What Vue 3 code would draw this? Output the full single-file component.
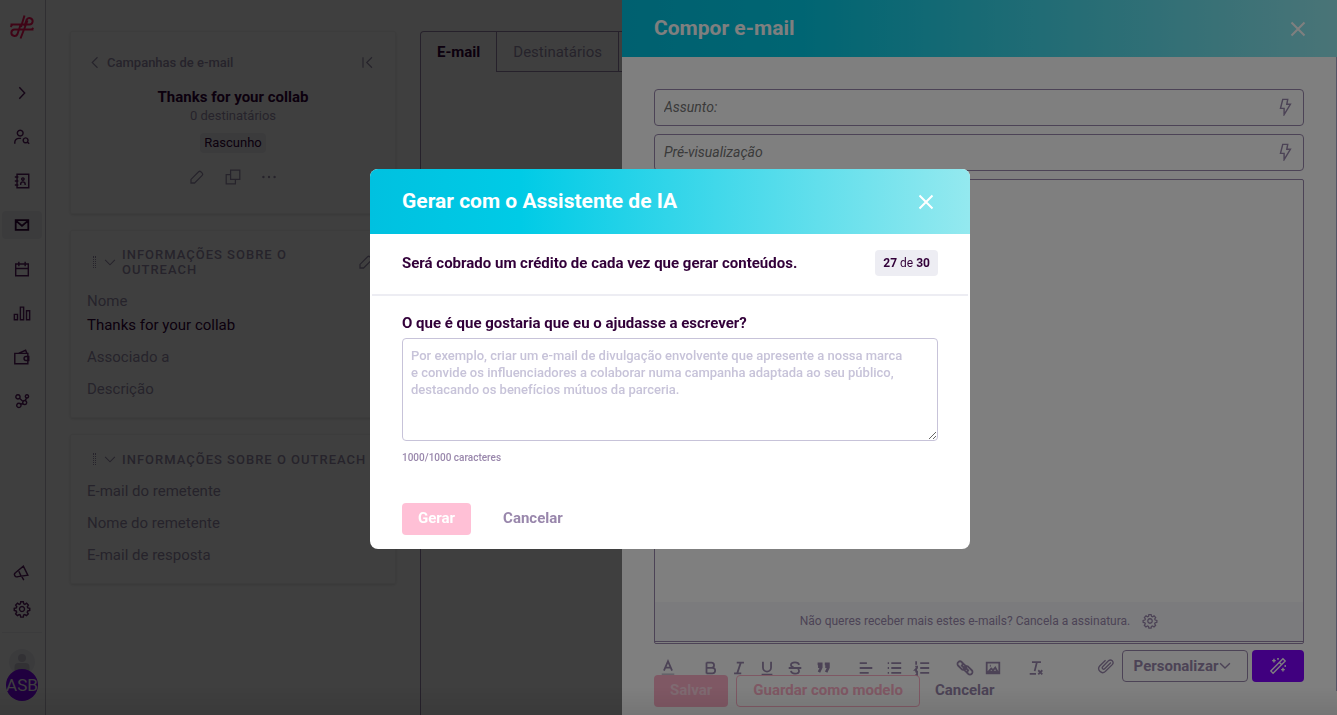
<script setup>
import { ref } from 'vue'

const mainNav = [
  { label: 'Expandir', d: 'M7 3.5l6 6.5-6 6.5' },
  { label: 'Descobrir', d: 'M8 2.5a3.2 3.2 0 1 0 .01 0zM2 17.500v-1.500a4.500 4.500 0 0 1 4.500-4.500h2.500M14 11a2.700 2.700 0 1 0 .01 0zM16 15.500l2 2' },
  { label: 'Contactos', d: 'M4.500 2.500h13v15h-13zM2 5.500h4M2 10h4M2 14.500h4M8.500 14.500v-1a2.500 2.500 0 0 1 5 0v1M11 6.500a1.300 1.300 0 1 0 .01 0z' },
  { label: 'Mensagens', d: 'M3 4.500h14v11h-14zM3 5l7 6 7-6', active: true },
  { label: 'Calendário', d: 'M3 4.500h14v13h-14zM3 9.500h14M6.500 2v5M13.500 2v5' },
  { label: 'Relatórios', d: 'M1.500 11.500h3.500v6h-3.500zM8.200 3.500h3.600v14h-3.600zM15 7.500h3.500v10h-3.500z' },
  { label: 'Pagamentos', d: 'M2 6h14.500v11.500h-14.500zM6 6l8-3.500 1.500 3.500M17.500 9.500h-3a2.200 2.200 0 0 0 0 4.400h3z' },
  { label: 'Integrações', d: 'M5.500 3a2.400 2.400 0 1 0 .01 0zM15.500 3a1.800 1.800 0 1 0 .01 0zM6.500 12.500a2.400 2.400 0 1 0 .01 0zM13 9.500a2.200 2.200 0 1 0 .01 0zM7.200 7l4 3.500M15 6.500l-1.200 3M8.500 13.800l2.500-1.300' }
]
const gear = 'M8.600 2h2.800l.5 2.200 1.300.6 1.900-1.200 2 2-1.200 1.900.6 1.300 2.100.5v2.400l-2.200.5-.6 1.300 1.200 1.900-2 2-1.900-1.200-1.300.6-.4 2.200h-2.800l-.5-2.200-1.300-.6-1.900 1.200-2-2 1.200-1.900-.6-1.300-2.100-.5v-2.400l2.200-.5.6-1.300-1.200-1.900 2-2 1.900 1.200 1.300-.6zM10 7.200a2.800 2.800 0 1 0 .01 0z'
const lowNav = [
  { label: 'Novidades', d: 'M3 9.500l8.500-7 5 10-11 1.500a2.300 2.300 0 0 1-2.500-4.500zM6.500 8l2.500 5.500M9.500 13.500l2.500 4.500' },
  { label: 'Definições', d: gear }
]
const bolt = 'M7.500 1.500h5.500l-1 5.500h4l-7 11.500v-7h-4z'
const pencil = 'M2.500 17.500v-4.500l9.500-9.500a2 2 0 0 1 2.800 0l1.700 1.700a2 2 0 0 1 0 2.800l-9.500 9.500z'

const fields = ref([
  { id: 'subject', label: 'Assunto:', value: '' },
  { id: 'preview', label: 'Pré-visualização', value: '' }
])
const tools = [
  { label: 'Negrito', d: 'M5 4v12M5 4h5.500a2.900 2.900 0 0 1 0 5.800h-5.500M5 9.800h6.500a3.100 3.100 0 0 1 0 6.200h-6.500', group: true },
  { label: 'Itálico', d: 'M7.500 4h8M4.500 16h8M12 4l-4 12' },
  { label: 'Sublinhado', d: 'M5.500 3v6.500a4.500 4.500 0 0 0 9 0v-6.500M4 17.500h12' },
  { label: 'Rasurado', d: 'M14.500 6.500c-.3-1.700-2-2.700-4.500-2.700-2.700 0-4.500 1.100-4.500 2.900 0 1.600 1.500 2.200 3 2.500M3 10h14M5.500 13.200c.3 1.900 2 3 4.500 3 2.700 0 4.500-1.200 4.500-3 0-1-.5-1.700-1.300-2.200' },
  { label: 'Citação', d: 'M4 5.500h4v4l-2.500 5M12 5.500h4v4l-2.500 5M4.500 8.500h3M12.500 8.500h3', heavy: true },
  { label: 'Alinhar', d: 'M3 4.500h8M3 10h14M3 15.500h10', group: true },
  { label: 'Lista', d: 'M7 4.500h11M7 10h11M7 15.500h11M3 4.500h1.500M3 10h1.500M3 15.500h1.500' },
  { label: 'Lista numerada', d: 'M8 4.500h10M8 10h10M8 15.500h10M3.500 2.500v4M2.500 8.500h2v1.500l-2 2h2M2.500 14h2v4h-2' },
  { label: 'Ligação', d: 'M10.500 11.500l-4-4a2.800 2.800 0 0 0-4-4 2.800 2.800 0 0 0 0 4l3.500 3.500a2.800 2.800 0 0 0 4.500 0M9.500 8.500l4 4a2.800 2.800 0 0 0 4 4 2.800 2.800 0 0 0 0-4l-3.500-3.500a2.800 2.800 0 0 0-4.500 0M10.500 11.500a2.800 2.800 0 0 0-.5-4.500l-3.500-3.500a2.800 2.800 0 0 0-4 0M9.500 8.500a2.800 2.800 0 0 0 .5 4.500l3.500 3.500a2.800 2.800 0 0 0 4 0', group: true },
  { label: 'Imagem', d: 'M3 4h14v12h-14zM5 14l3-3.500 2 2 2.500-3 2.500 4.500zM6.500 7.500h1' },
  { label: 'Limpar', d: 'M5.500 3.500h10M11 3.500l-2.500 10M3 16.500h7M12.500 12.500l4.500 4.500M17 12.500l-4.500 4.500', group: true }
]
const senderRows = ['E-mail do remetente', 'Nome do remetente', 'E-mail de resposta']
const prompt = ref('')
const message = ref('')
</script>

<template>
  <div class="page">
    <aside class="sidebar">
      <svg class="logo" viewBox="0 0 24 24"><path d="M14.500 0.500l-3.500 11.500M17.500 5.500l-7 18M.5 9.500h15.500M23.500 14.500h-15.500M16 9.500h3.500a3.200 3.200 0 1 0-3-4.500l-2 6M8 14.500h-3.500a3.200 3.200 0 1 0 3 4.500l3-9M0.500 12l2-2.500M21.500 14.500l2-1.500" /></svg>
      <nav class="nav">
        <a v-for="n in mainNav" :key="n.label" href="#" :aria-label="n.label" :class="{ active: n.active }">
          <svg class="icon" viewBox="0 0 20 20"><path :d="n.d" /></svg>
        </a>
      </nav>
      <nav class="nav low">
        <a v-for="n in lowNav" :key="n.label" href="#" :aria-label="n.label">
          <svg class="icon" viewBox="0 0 20 20"><path :d="n.d" /></svg>
        </a>
      </nav>
      <div class="account">
        <svg class="person" viewBox="0 0 26 26"><circle cx="13" cy="13" r="13" fill="#ededf3" /><circle cx="13" cy="9" r="4" fill="#c8c5d3" /><path d="M5.500 23v-5a4 4 0 0 1 4-4h7a4 4 0 0 1 4 4v5z" fill="#c8c5d3" /></svg>
        <span class="avatar">ASB</span>
      </div>
    </aside>

    <main class="main">
      <div class="cards">
        <section class="card summary">
          <div class="crumb">
            <a href="#"><svg class="icon" viewBox="0 0 20 20"><path d="M14 3l-7 7 7 7" /></svg>Campanhas de e-mail</a>
            <button type="button" aria-label="Recolher"><svg class="icon" viewBox="0 0 20 20"><path d="M4 3v14M16 3l-7 7 7 7" /></svg></button>
          </div>
          <h2>Thanks for your collab</h2>
          <p>0 destinatários</p>
          <span class="tag">Rascunho</span>
          <div class="actions">
            <button type="button" aria-label="Editar"><svg class="icon" viewBox="0 0 20 20"><path :d="pencil" /></svg></button>
            <button type="button" aria-label="Duplicar"><svg class="icon" viewBox="0 0 20 20"><path d="M7 1.500h11.500v11.500h-11.500zM7 7h-5.500v11.500h11.500v-5.500" /></svg></button>
            <button type="button" aria-label="Mais"><svg class="icon dots" viewBox="0 0 20 20"><circle cx="3" cy="10" r="1.500" /><circle cx="10" cy="10" r="1.500" /><circle cx="17" cy="10" r="1.500" /></svg></button>
          </div>
        </section>

        <section class="card">
          <header class="card-head">
            <span class="grip"></span>
            <svg class="icon" viewBox="0 0 20 20"><path d="M3 7l7 7 7-7" /></svg>
            <h3>Informações sobre o outreach</h3>
            <button type="button" aria-label="Editar informações"><svg class="icon" viewBox="0 0 20 20"><path :d="pencil" /></svg></button>
          </header>
          <dl>
            <div><dt>Nome</dt><dd>Thanks for your collab</dd></div>
            <div><dt>Associado a</dt></div>
            <div><dt>Descrição</dt></div>
          </dl>
        </section>

        <section class="card">
          <header class="card-head single">
            <span class="grip"></span>
            <svg class="icon" viewBox="0 0 20 20"><path d="M3 7l7 7 7-7" /></svg>
            <h3>Informações sobre o outreach</h3>
          </header>
          <dl>
            <div v-for="r in senderRows" :key="r"><dt>{{ r }}</dt></div>
          </dl>
        </section>
      </div>

      <div class="content">
        <div class="tabs">
          <button type="button" class="current">E-mail</button>
          <button type="button">Destinatários</button>
          <span class="rest"></span>
        </div>
        <div class="panel"></div>
      </div>
    </main>

    <div class="overlay side">
      <section class="drawer">
        <header class="bar">
          <h2>Compor e-mail</h2>
          <button type="button" class="close" aria-label="Fechar editor"><svg viewBox="0 0 16 16"><path d="M1.500 1.500l13 13M14.500 1.500l-13 13" /></svg></button>
        </header>
        <div class="compose">
          <div v-for="f in fields" :key="f.id" class="field">
            <input :id="f.id" v-model="f.value" type="text" :aria-label="f.label" :placeholder="f.label">
            <button type="button" :aria-label="'Variáveis de ' + f.label"><svg class="icon" viewBox="0 0 20 20"><path :d="bolt" /></svg></button>
          </div>
          <div class="editor">
            <textarea v-model="message" aria-label="Mensagem"></textarea>
            <div class="optout">
              <span>Não queres receber mais estes e-mails? Cancela a assinatura.</span>
              <svg class="icon" viewBox="0 0 20 20"><path :d="gear" /></svg>
            </div>
          </div>
          <div class="toolbar">
            <button type="button" class="color" aria-label="Cor do texto"><svg class="icon" viewBox="0 0 20 20"><path d="M5.500 13l4.500-10.500 4.500 10.500M7 9.500h6" /><path d="M3 17h14" class="swatch" /></svg></button>
            <button v-for="t in tools" :key="t.label" type="button" :aria-label="t.label" :class="{ group: t.group, heavy: t.heavy }"><svg class="icon" viewBox="0 0 20 20"><path :d="t.d" /></svg></button>
            <button type="button" class="attach" aria-label="Anexar"><svg class="icon" viewBox="0 0 20 20"><path d="M15.500 6l-7 7a1.500 1.500 0 0 1-2.200-2.200l6.700-6.800a3 3 0 0 1 4.200 4.200l-8 8a4.400 4.400 0 0 1-6.200-6.200l6.500-6.500" /></svg></button>
            <button type="button" class="personalize">Personalizar<svg class="icon" viewBox="0 0 20 20"><path d="M3 6l7 7 7-7" /></svg></button>
            <button type="button" class="magic" aria-label="Assistente de IA"><svg class="icon" viewBox="0 0 20 20"><path d="M2 15.500l13.500-13.500 2.500 2.500-13.500 13.500zM11.500 6l2.500 2.500M5.500 2v4M3.500 4h4M15.500 12v4M13.500 14h4M10 1v2M9 2h2M18 9v2" /></svg></button>
          </div>
        </div>
        <footer class="buttons">
          <button type="button" class="primary" disabled>Salvar</button>
          <button type="button" class="outline" disabled>Guardar como modelo</button>
          <button type="button" class="plain">Cancelar</button>
        </footer>
        <span class="scroll"></span>
      </section>
    </div>

    <div class="overlay middle">
      <section class="modal" role="dialog" aria-labelledby="dialog-title">
        <header class="bar">
          <h2 id="dialog-title">Gerar com o Assistente de IA</h2>
          <button type="button" class="close" aria-label="Fechar"><svg viewBox="0 0 16 16"><path d="M1.500 1.500l13 13M14.500 1.500l-13 13" /></svg></button>
        </header>
        <div class="credits">
          <strong>Será cobrado um crédito de cada vez que gerar conteúdos.</strong>
          <span class="count"><b>27</b> de <b>30</b></span>
        </div>
        <form class="form" @submit.prevent>
          <label for="prompt">O que é que gostaria que eu o ajudasse a escrever?</label>
          <textarea id="prompt" v-model="prompt" maxlength="1000" placeholder="Por exemplo, criar um e-mail de divulgação envolvente que apresente a nossa marca e convide os influenciadores a colaborar numa campanha adaptada ao seu público, destacando os benefícios mútuos da parceria."></textarea>
          <small>{{ 1000 - prompt.length }}/1000 caracteres</small>
          <div class="form-actions">
            <button type="submit" class="primary" disabled>Gerar</button>
            <button type="button" class="plain">Cancelar</button>
          </div>
        </form>
      </section>
    </div>
    <div class="edge"></div>
  </div>
</template>

<style>
body { margin: 0; background: #fff; overflow: hidden; }
</style>

<style scoped>
.page { display: flex; height: 100vh; overflow: hidden; font-family: Roboto, "Liberation Sans", sans-serif; font-size: 15px; color: #320039; }
* { box-sizing: border-box; }
h2, h3, p, dl, dd { margin: 0; }
button { display: flex; align-items: center; justify-content: center; padding: 0; border: 0; background: none; color: inherit; font: inherit; }
a { color: inherit; text-decoration: none; }
.icon { display: block; flex: none; width: 18px; height: 18px; fill: none; stroke: currentColor; stroke-width: 1.6; }

.sidebar { display: flex; flex: none; flex-direction: column; align-items: center; width: 46px; padding: 15px 3px 14px 2px; border-right: 1px solid #c0bdca; color: #591b60; }
.logo { width: 24px; height: 24px; fill: none; stroke: #ff1358; stroke-width: 2; }
.nav { display: flex; flex-direction: column; gap: 16px; width: 40px; margin-top: 40px; }
.nav a { display: flex; align-items: center; justify-content: center; height: 28px; border-radius: 4px; }
.nav .active { background: #ededf3; color: #320039; }
.nav .active .icon { stroke-width: 2; }
.low { gap: 8px; margin-top: auto; padding-bottom: 9px; border-bottom: 1px solid #ededf3; }
.account { display: flex; flex-direction: column; align-items: center; margin-top: 16px; }
.person { width: 26px; height: 26px; }
.avatar { display: grid; place-items: center; width: 32px; height: 32px; margin-top: -6px; border-radius: 50%; background: #8000ff; color: #fff; font-size: 17px; }

.main { display: flex; flex: 1; gap: 24px; padding: 31px 24px 0; }
.cards { display: flex; flex: none; flex-direction: column; gap: 16px; width: 326px; }
.card { padding: 15px 16px 12px; border: 1px solid #f1f1f1; border-radius: 2px; box-shadow: 0 1px 3px #0002; color: #9a8fae; }
.summary { display: flex; flex-direction: column; align-items: center; height: 183px; }
.crumb { display: flex; align-items: center; justify-content: space-between; width: 100%; height: 31px; font-size: 13px; font-weight: 500; }
.crumb a { display: flex; align-items: center; gap: 5px; }
.crumb .icon { width: 15px; height: 15px; }
.crumb button { width: 24px; }
.summary h2 { margin-top: 10px; color: #320039; font-size: 15px; font-weight: 700; line-height: 18px; }
.summary p { font-size: 13px; line-height: 20px; }
.tag { margin-top: 7px; padding: 0 4px; border-radius: 4px; background: #ededf3; color: #320039; font-size: 13px; line-height: 20px; }
.actions { display: flex; gap: 20px; margin-top: 16px; }
.actions .icon { width: 16px; height: 16px; }
.actions .dots { fill: currentColor; stroke: none; }
.card-head { display: flex; align-items: center; min-height: 32px; gap: 5px; }
.card-head .icon { width: 14px; height: 14px; }
.card-head h3 { flex: 1; font-size: 13px; font-weight: 500; letter-spacing: 1px; line-height: 15px; text-transform: uppercase; }
.card-head button { width: 26px; }
.card-head button .icon { width: 16px; height: 16px; }
.card-head.single { margin-top: -7px; }
.single h3 { white-space: nowrap; }
.grip { width: 3px; height: 12px; margin: 0 2px 0 6px; border: 1px dotted #9a8fae; border-width: 0 1px; }
.card dt { line-height: 32px; }
.card dd { padding-bottom: 8px; color: #320039; line-height: 16px; }
.card-head + dl { padding-top: 7px; }
.card-head.single + dl { padding-top: 0; }

.content { display: flex; flex: 1; flex-direction: column; min-width: 0; }
.tabs { display: flex; height: 41px; }
.tabs button { padding: 0 16px; border: 1px solid #9987ac; border-left: 0; color: #9a8fae; }
.tabs .current { border-bottom: 0; border-left: 1px solid #9987ac; border-top-left-radius: 4px; color: #320039; font-weight: 700; }
.rest { flex: 1; border: 1px solid #9987ac; border-left: 0; }
.panel { flex: 1; border-left: 1px solid #9987ac; }

.overlay { position: fixed; inset: 0; display: flex; background: rgba(0, 0, 0, 0.5); }
.side { justify-content: flex-end; }
.middle { align-items: center; justify-content: center; padding: 3px 0 0 3px; }
.bar { display: flex; flex: none; align-items: center; justify-content: space-between; padding: 0 32px; background: linear-gradient(90deg, #00c1e0, #00cbe6 25%, #94e9ef); color: #fff; }
.bar h2 { padding-bottom: 2px; font-size: 21px; font-weight: 700; line-height: 24px; }
.close { width: 24px; height: 24px; }
.close svg { width: 16px; height: 16px; fill: none; stroke: #fff; stroke-width: 2; }

.drawer { position: relative; display: flex; flex-direction: column; width: 715px; background: #fff; color: #9987ac; }
.drawer .bar { height: 57px; padding-right: 27px; }
.compose { display: flex; flex: 1; flex-direction: column; padding: 32px 33px 33px 32px; }
.field { display: flex; align-items: center; height: 37px; margin-bottom: 8px; padding: 0 9px 1px; border: 1px solid #9987ac; border-radius: 4px; }
.field input { flex: 1; min-width: 0; padding: 0; border: 0; outline: 0; background: none; color: #320039; font: italic 14px Roboto, sans-serif; }
.field input::placeholder { color: #757575; opacity: 1; }
.editor { display: flex; flex: 1; flex-direction: column; padding-bottom: 1px; border: 1px solid #9987ac; border-radius: 2px; }
.editor textarea { flex: 1; border: 0; outline: 0; resize: none; background: none; }
.optout { display: flex; align-items: center; justify-content: center; gap: 12px; height: 40px; padding-bottom: 1px; border-bottom: 1px solid #9987ac; background: #f7f7fb; font-size: 12px; }
.optout .icon { width: 16px; height: 16px; }
.toolbar { display: flex; align-items: center; height: 32px; margin-top: 6px; }
.toolbar button { flex: none; width: 28px; height: 32px; padding-top: 3px; }
.toolbar .icon { stroke-width: 2; }
.toolbar .group { margin-left: 15px; }
.toolbar .heavy .icon { stroke-width: 3; }
.toolbar .swatch { stroke: #c8c5d3; }
.toolbar .attach { margin-left: auto; padding: 0; }
.toolbar .attach .icon, .toolbar .magic .icon { stroke-width: 1.5; }
.toolbar .personalize { width: 126px; margin: 0 4px 0 2px; padding: 0 4px 1px 0; border: 1px solid #9987ac; border-radius: 4px; font-weight: 700; }
.personalize .icon { width: 14px; height: 14px; }
.toolbar .magic { width: 52px; padding: 0; border-radius: 4px; background: #8000ff; color: #fff; }
.buttons { position: absolute; bottom: 8px; left: 32px; display: flex; gap: 8px; }
.primary, .outline, .plain { height: 32px; padding: 0 16px 2px; border-radius: 4px; font-weight: 700; }
.primary { background: #ffc0d6; color: #fff; }
.buttons .primary { background: #ffb0c8; color: #ffd7e4; }
.buttons .plain { padding: 0 7px 2px; }
.outline { border: 1px solid #ffb0c8; color: #ffb0c8; }
.plain { color: #9987ac; }
.scroll { position: absolute; top: 57px; right: 0; bottom: 24px; width: 1px; background: #a9a8c8; }

.modal { width: 600px; max-width: 100%; border-radius: 8px; background: #fff; overflow: hidden; }
.modal .bar { height: 65px; }
.credits { display: flex; align-items: center; justify-content: space-between; margin: 0 2px; padding: 16px 30px 18px; border-bottom: 2px solid #ededf3; }
.count { padding: 0 8px; border-radius: 4px; background: #ededf3; font-size: 12px; line-height: 26px; }
.form { display: flex; flex-direction: column; padding: 17px 32px 14px; }
.form label { font-weight: 700; line-height: 20px; }
.form textarea { height: 103px; margin-top: 5px; padding: 8px 32px 8px 8px; border: 1px solid #c7c3d9; border-radius: 4px; outline: 0; color: #320039; font: 500 13px/17px Roboto, sans-serif; resize: vertical; }
.form textarea::placeholder { color: #c7c3d9; opacity: 1; }
.form small { margin-top: 10px; color: #9987ac; font-size: 10px; font-weight: 500; line-height: 14px; }
.form-actions { display: flex; gap: 16px; margin-top: 38px; }
.edge { position: fixed; right: 0; bottom: 0; left: 0; height: 28px; background: linear-gradient(transparent, rgba(0, 0, 0, 0.08)); pointer-events: none; }
</style>
